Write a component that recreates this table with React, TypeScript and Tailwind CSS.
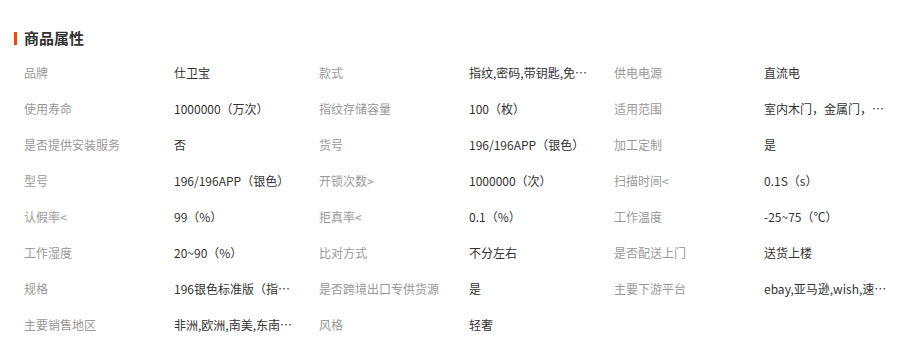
const ATTRS: [string, string][] = [
  ["品牌", "仕卫宝"],
  ["款式", "指纹,密码,带钥匙,免接线,刷卡"],
  ["供电电源", "直流电"],
  ["使用寿命", "1000000（万次）"],
  ["指纹存储容量", "100（枚）"],
  ["适用范围", "室内木门，金属门，防盗门"],
  ["是否提供安装服务", "否"],
  ["货号", "196/196APP（银色）"],
  ["加工定制", "是"],
  ["型号", "196/196APP（银色）"],
  ["开锁次数>", "1000000（次）"],
  ["扫描时间<", "0.1S（s）"],
  ["认假率<", "99（%）"],
  ["拒真率<", "0.1（%）"],
  ["工作温度", "-25~75（℃）"],
  ["工作湿度", "20~90（%）"],
  ["比对方式", "不分左右"],
  ["是否配送上门", "送货上楼"],
  ["规格", "196银色标准版（指纹+密码+钥匙）"],
  ["是否跨境出口专供货源", "是"],
  ["主要下游平台", "ebay,亚马逊,wish,速卖通"],
  ["主要销售地区", "非洲,欧洲,南美,东南亚,北美"],
  ["风格", "轻奢"],
];

export default function App() {
  return (
    <div
      className="w-[909px] h-[348px] bg-white overflow-hidden"
      style={{ fontFamily: '"Noto Sans CJK SC", "Liberation Sans", sans-serif' }}
    >
      <div className="flex items-center h-4 mt-[30px] pl-[14px]">
        <span className="w-[3px] h-[13px] bg-[#ff4400]" />
        <h2 className="ml-[7px] text-[15px] leading-4 font-bold text-[#333]">商品属性</h2>
      </div>
      <ul className="grid grid-cols-[295px_295px_295px] pl-6 mt-[9px]">
        {ATTRS.map(([k, v]) => (
          <li key={k} className="flex items-center h-9 text-xs">
            <span className="w-[150px] shrink-0 text-[#999] whitespace-nowrap">{k}</span>
            <span className="w-[126px] text-[#333] truncate">{v}</span>
          </li>
        ))}
      </ul>
    </div>
  );
}
